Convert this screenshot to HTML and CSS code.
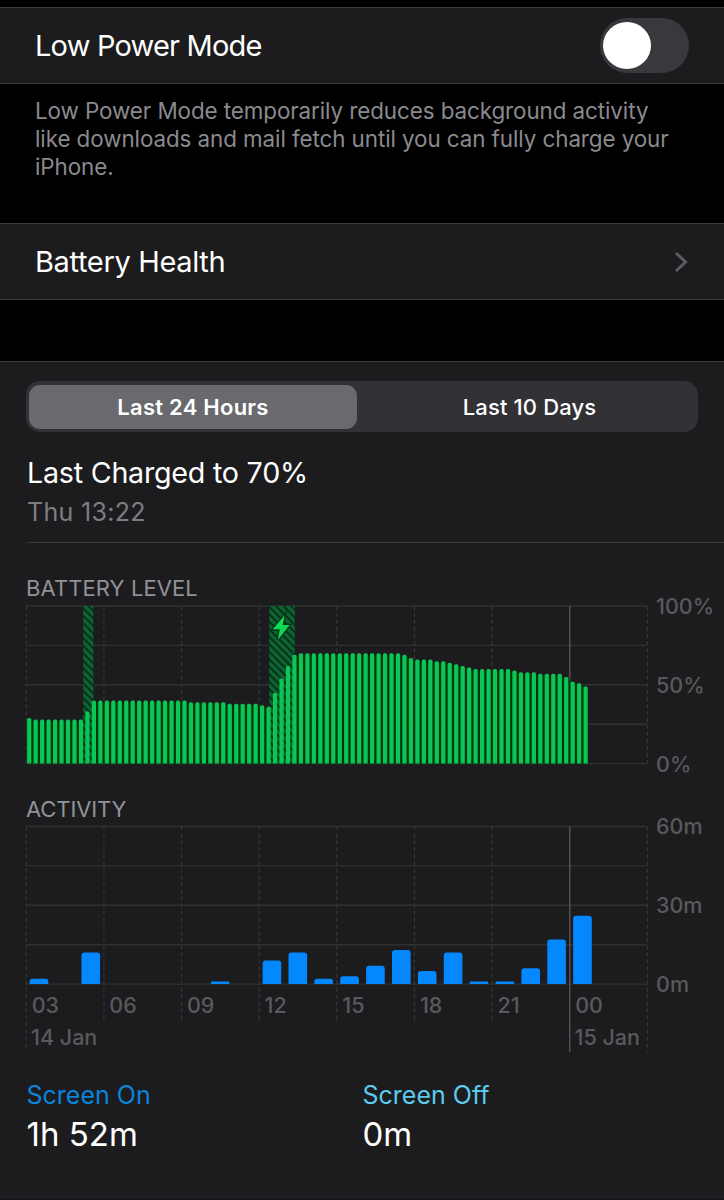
FILE: index.html
```html
<!DOCTYPE html>
<html lang="en">
<head>
  <meta charset="UTF-8">
  <meta name="viewport" content="width=device-width, initial-scale=1.0">
  <title>Battery</title>
  <link rel="stylesheet" href="styles.css">
</head>
<body>
<section class="cell low-power">
  <span class="cell-title low-power-title">Low Power Mode</span>
  <div class="switch"><div class="knob"></div></div>
</section>
<p class="footnote">Low Power Mode temporarily reduces background activity<br>like downloads and mail fetch until you can fully charge your<br>iPhone.</p>

<section class="cell health">
  <span class="cell-title health-title">Battery Health</span>
  <svg class="chevron" width="14" height="22" viewBox="0 0 14 22">
    <path d="M2 2 L11.5 11 L2 20"/>
  </svg>
</section>

<main class="usage">
  <div class="segments">
    <div class="segment active">Last 24 Hours</div>
    <div class="segment inactive">Last 10 Days</div>
  </div>

  <div class="charged">
    <div class="charged-title">Last Charged to 70%</div>
    <div class="charged-time">Thu 13:22</div>
  </div>

  <h2 class="level-heading">BATTERY LEVEL</h2>
  <svg id="level" class="chart" width="724" height="170" viewBox="0 600 724 170">
    <defs>
      <pattern id="hatch" width="7.5" height="7.5" patternUnits="userSpaceOnUse">
        <rect width="7.5" height="7.5" fill="#0c6434"/>
        <path d="M-2 -2 L9.5 9.5 M-2 5.5 L2 9.5 M5.5 -2 L9.5 2" stroke="#04240f" stroke-width="1.5"/>
      </pattern>
    </defs>
  </svg>

  <h2 class="activity-heading">ACTIVITY</h2>
  <svg id="activity" class="chart" width="724" height="236" viewBox="0 820 724 236"></svg>

  <div class="totals">
    <div class="total">
      <div class="total-label on">Screen On</div>
      <div class="total-value">1h 52m</div>
    </div>
    <div class="total">
      <div class="total-label off">Screen Off</div>
      <div class="total-value">0m</div>
    </div>
  </div>
</main>

<script src="charts.js"></script>
</body>
</html>
```
FILE: styles.css
```css
* {
  box-sizing: border-box;
}

body {
  margin: 0;
  padding-top: 7px;
  width: 724px;
  height: 1200px;
  overflow: hidden;
  background-color: #000;
  color: #fff;
  font-family: Inter, "Liberation Sans", sans-serif;
}

.cell {
  display: flex;
  align-items: center;
  justify-content: space-between;
  height: 77px;
  padding: 0 35px;
  background-color: #1c1c1e;
  border-top: 1px solid #3a3a3c;
  border-bottom: 1px solid #3a3a3c;
}

.cell-title {
  font-size: 29px;
}

.low-power-title {
  letter-spacing: -0.8px;
}

.health-title {
  letter-spacing: -0.35px;
}

.switch {
  width: 89px;
  height: 55px;
  margin-top: -1px;
  padding: 4px 3px;
  border-radius: 28px;
  background-color: #39393d;
}

.knob {
  width: 48px;
  height: 47px;
  border-radius: 50%;
  background-color: #fff;
}

.footnote {
  margin: 0;
  padding: 13px 0 0 35px;
  height: 139px;
  font-size: 22.4px;
  line-height: 28px;
  letter-spacing: -0.08px;
  white-space: nowrap;
  color: #8a8a8e;
}

.chevron {
  margin-right: 1px;
}

.chevron path {
  fill: none;
  stroke: #5d5d61;
  stroke-width: 3;
}

.usage {
  height: 839px;
  margin-top: 61px;
  padding-top: 19px;
  border-top: 1px solid #3a3a3c;
  border-bottom: 1px solid #1a111c;
  background-color: #1c1c1e;
}

.segments {
  display: flex;
  width: 672px;
  height: 51px;
  margin-left: 26px;
  padding: 4px 3px 3px;
  border-radius: 14px;
  background-color: #323136;
}

.segment {
  flex: 1;
  display: flex;
  align-items: center;
  justify-content: center;
  font-size: 22px;
  font-weight: 500;
  letter-spacing: 0.15px;
}

.active {
  flex: 0 0 328px;
  border-radius: 11px;
  background-color: #6a696e;
  font-weight: 600;
  letter-spacing: 0.25px;
}

.inactive {
  padding-left: 7px;
}

.charged {
  height: 111px;
  margin-left: 27px;
  padding-top: 23px;
  border-bottom: 1px solid #3a3a3c;
}

.charged-title {
  font-size: 28.7px;
  line-height: 36px;
  letter-spacing: -0.25px;
}

.charged-time {
  margin-top: 5px;
  font-size: 25px;
  line-height: 32px;
  letter-spacing: 0.3px;
  color: #7e7e82;
}

h2 {
  margin: 0 0 0 26px;
  font-size: 22px;
  font-weight: 400;
  line-height: 28px;
  color: #929297;
}

.level-heading {
  padding-top: 31px;
  height: 57px;
  letter-spacing: 0.1px;
}

.activity-heading {
  padding-top: 25px;
  height: 50px;
  letter-spacing: -0.1px;
}

.chart {
  display: block;
  overflow: visible;
}

.grid {
  stroke: #303032;
  stroke-width: 1.4;
}

.dashed {
  stroke: #363638;
  stroke-width: 1.2;
  stroke-dasharray: 4 3;
}

.midnight {
  stroke: #5c5c60;
  stroke-width: 1.2;
}

.bar-gap {
  fill: #04380f;
}

.level-bar {
  fill: #0bc655;
}

.activity-bar {
  fill: #0488ff;
}

.axis {
  fill: #59595d;
  font-size: 21.5px;
  font-weight: 500;
}

.bolt {
  fill: #0fdb52;
  stroke: #06381a;
  stroke-width: 3;
  paint-order: stroke;
}

.totals {
  display: grid;
  grid-template-columns: 336px 1fr;
  padding: 23px 0 0 26.5px;
}

.total-label {
  font-size: 25px;
  line-height: 32px;
}

.on {
  color: #0a84dc;
}

.off {
  color: #5bcbee;
}

.total-value {
  margin-top: 3px;
  font-size: 33px;
  line-height: 41px;
}
```
FILE: charts.js
```js
const NS = 'http://www.w3.org/2000/svg';
const LEFT = 26;
const HOUR = 25.88;
const HEIGHT = 157.6;

// one value per quarter of an hour, [level, count]
const levels = [
  [29, 1], [28, 8], [33, 1], [40, 15], [39, 6], [38, 5], [37, 1], [36, 1],
  [45, 1], [54, 1], [62, 1], [69, 1], [70, 16], [69, 1], [67, 1], [66, 3],
  [65, 2], [64, 1], [63, 1], [62, 1], [61, 1], [60, 6], [59, 1], [58, 3],
  [57, 4], [55, 1], [52, 1], [51, 1], [49, 1]
].flatMap(([level, count]) => Array(count).fill(level));

// minutes of use per hour
const minutes = [2, 0, 12, 0, 0, 0, 0, 1, 0, 9, 12, 2, 3, 7, 13, 5, 12, 1, 1, 6, 17, 26];

function add(parent, tag, attrs, text) {
  const el = document.createElementNS(NS, tag);
  for (const key in attrs) el.setAttribute(key, attrs[key]);
  if (text) el.textContent = text;
  parent.appendChild(el);
}

function topRounded(x, y, w, bottom, r) {
  return `M${x} ${bottom}V${y + r}Q${x} ${y} ${x + r} ${y}H${x + w - r}Q${x + w} ${y} ${x + w} ${y + r}V${bottom}Z`;
}

function drawGrid(svg, top, labels) {
  for (let i = 0; i <= 4; i++) {
    const y = top + i * HEIGHT / 4;
    add(svg, 'line', { class: 'grid', x1: LEFT, x2: LEFT + HOUR * 24, y1: y, y2: y });
  }
  labels.forEach((label, i) => {
    add(svg, 'text', { class: 'axis', x: 656, y: top + i * HEIGHT / 2 + 7.9 }, label);
  });
}

function drawColumns(svg, top, shortEnd, longEnd) {
  for (let i = 0; i <= 8; i++) {
    const x = LEFT + 0.3 + i * 3 * HOUR;
    const end = i === 0 || i >= 7 ? longEnd : shortEnd;
    add(svg, 'line', { class: i === 7 ? 'midnight' : 'dashed', x1: x, x2: x, y1: top, y2: end });
  }
}

const level = document.getElementById('level');
const levelTop = 606;
const levelBottom = levelTop + HEIGHT;
drawGrid(level, levelTop, ['100%', '50%', '0%']);
drawColumns(level, levelTop, levelBottom, levelBottom);
levels.forEach((value, i) => {
  const y = levelBottom - value / 100 * HEIGHT;
  const x = 27 + i * HOUR / 4;
  add(level, 'rect', { class: 'bar-gap', x: x - 0.5, y: y + 2, width: i === 86 ? 5 : 6.6, height: levelBottom - y - 2 });
});
add(level, 'rect', { fill: 'url(#hatch)', x: 83.2, y: levelTop, width: 10.2, height: HEIGHT });
add(level, 'rect', { fill: 'url(#hatch)', x: 269.2, y: levelTop, width: 25.6, height: HEIGHT });
levels.forEach((value, i) => {
  const y = levelBottom - value / 100 * HEIGHT;
  add(level, 'path', { class: 'level-bar', d: topRounded(27.1 + i * HOUR / 4, y, 4.2, levelBottom, 1.6) });
});
add(level, 'path', { class: 'bolt', d: 'M284.6 615.3 L272.8 629.3 H279.8 L278 639.8 L289.6 625 H282.8 Z' });

const activity = document.getElementById('activity');
const activityTop = 826.5;
const activityBottom = activityTop + HEIGHT;
drawGrid(activity, activityTop, ['60m', '30m', '0m']);
drawColumns(activity, activityTop, 1023, 1052);
minutes.forEach((value, i) => {
  if (!value) return;
  const h = value / 60 * HEIGHT;
  add(activity, 'path', { class: 'activity-bar', d: topRounded(29.7 + i * HOUR, activityBottom - h, 18.6, activityBottom, Math.min(3, h / 2)) });
});
['03', '06', '09', '12', '15', '18', '21', '00'].forEach((hour, i) => {
  add(activity, 'text', { class: 'axis', x: 31.7 + i * HOUR * 3, y: 1013 }, hour);
});
add(activity, 'text', { class: 'axis', x: 31, y: 1045 }, '14 Jan');
add(activity, 'text', { class: 'axis', x: 574.5, y: 1045 }, '15 Jan');
```
